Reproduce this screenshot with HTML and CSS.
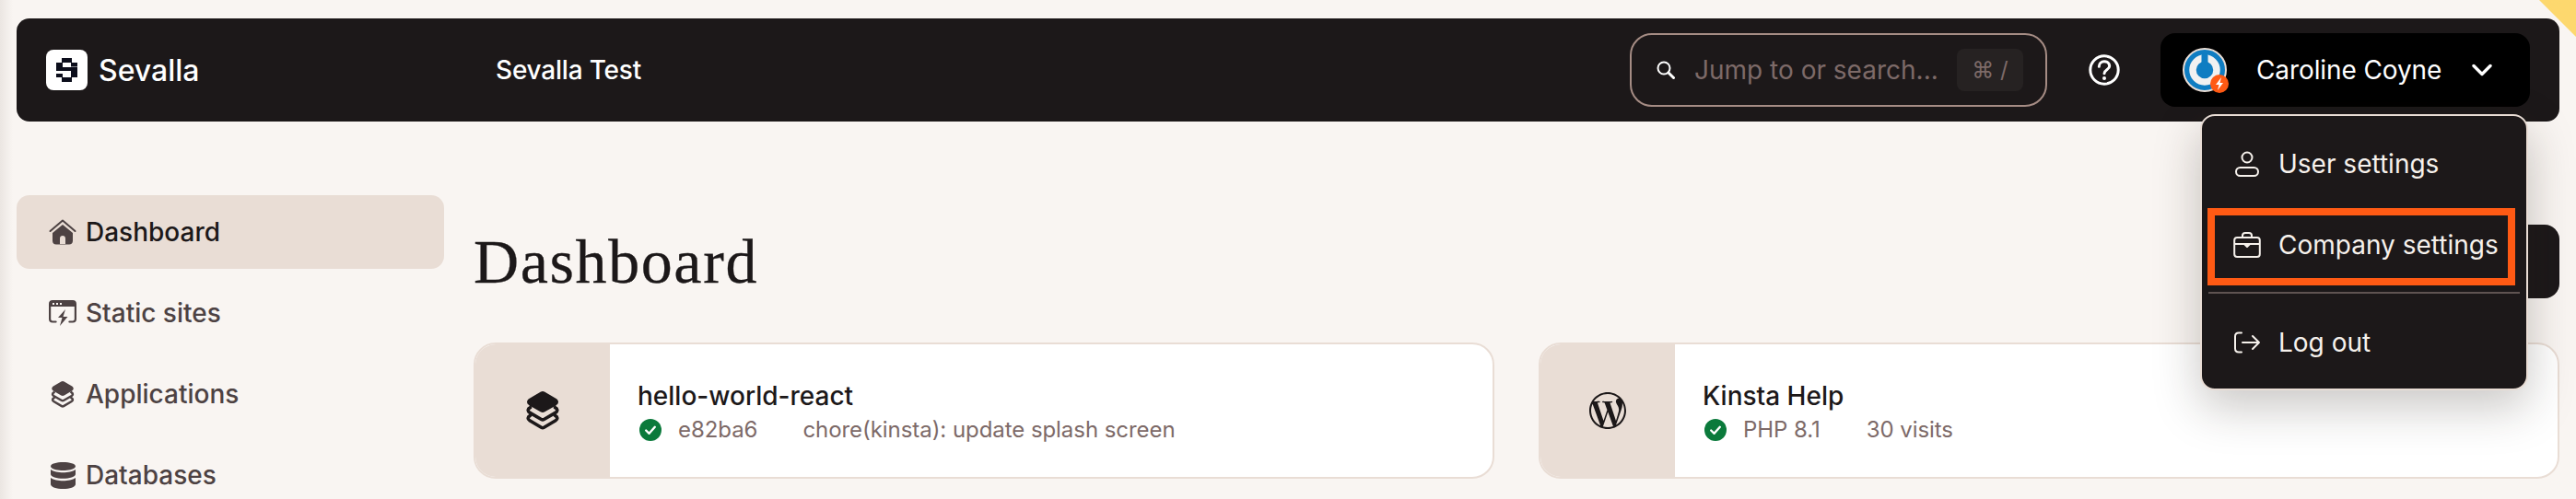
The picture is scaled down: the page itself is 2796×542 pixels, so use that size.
FILE: index.html
```html
<!DOCTYPE html>
<html lang="en">
<head>
  <meta charset="UTF-8">
  <title>Sevalla Dashboard</title>
  <link rel="stylesheet" href="styles.css">
</head>
<body>
  <svg class="defs" width="0" height="0">
    <symbol id="stack" viewBox="0 0 24 28">
      <path fill="currentColor" d="M10.4.5a3.2 3.2 0 0 1 3.2 0l8.2 4.8c2 1.2 2 3.6 0 4.8l-8.2 4.8a3.2 3.2 0 0 1-3.2 0L2.200 10.100c-2-1.200-2-3.600 0-4.800z"/>
      <path fill="none" stroke="currentColor" stroke-width="2.400" stroke-linecap="round" stroke-linejoin="round" d="M3 11.800c-2 1-2 2.600-.4 3.600l8.400 4.900c.7.400 1.300.400 2 0l8.400-4.900c1.600-1 1.600-2.600-.4-3.600M3 17.600c-2 1-2 2.600-.4 3.600l8.400 5c.7.400 1.300.400 2 0l8.400-5c1.600-1 1.600-2.600-.4-3.600"/>
    </symbol>
    <symbol id="check" viewBox="0 0 24 24">
      <circle cx="12" cy="12" r="12" fill="#0b7a3b"/>
      <path fill="none" stroke="#fff" stroke-width="2.400" stroke-linecap="round" stroke-linejoin="round" d="M7.200 12.500l3.400 3.300 6.200-7"/>
    </symbol>
  </svg>

  <div class="corner"></div>

  <header class="topbar">
    <div class="brand">
      <span class="brand-logo">
        <svg width="45" height="44" viewBox="0 0 45 44">
          <path fill="#0c0e1c" d="M17 9h11v5H17zM11 14h7v5h-7zM27 14h7v4.500h-7zM11 19h23v4H11zM27 23h7v7h-7zM11 26h7v4h-7zM17 30h11v5H17z"/>
        </svg>
      </span>
      <span class="brand-name">Sevalla</span>
    </div>
    <div class="project">Sevalla Test</div>

    <div class="top-actions">
      <div class="search">
        <svg class="search-icon" width="20" height="20" viewBox="0 0 20 20">
          <circle cx="8" cy="8" r="6.500" fill="none" stroke="#fff" stroke-width="2"/>
          <path d="M13 13l5.500 5.500" stroke="#fff" stroke-width="3" stroke-linecap="round"/>
        </svg>
        <span class="search-text">Jump to or search...</span>
        <span class="kbd">⌘ /</span>
      </div>
      <svg class="help" width="34" height="34" viewBox="0 0 34 34">
        <circle cx="17" cy="17" r="15.200" fill="none" stroke="#fff" stroke-width="3"/>
        <path d="M11.300 13.200c0-3.200 2.500-5.400 5.700-5.400s5.700 2 5.700 4.900c0 4-5.700 4-5.700 8" fill="none" stroke="#fff" stroke-width="3" stroke-linecap="round"/>
        <circle cx="17" cy="26" r="2" fill="#fff"/>
      </svg>
      <div class="user">
        <svg class="avatar" width="52" height="52" viewBox="0 0 52 52">
          <circle cx="24" cy="24" r="23" fill="#0f7dc2" stroke="#e9ddd5" stroke-width="2"/>
          <circle cx="24" cy="24" r="13" fill="none" stroke="#f1f1f1" stroke-width="7.500"/>
          <rect x="20.500" y="6" width="7" height="18" rx="2" fill="#0f7dc2"/>
          <circle cx="40" cy="39" r="10" fill="#ff5a14"/>
          <path d="M42 32l-6 8h3.500l-1.500 6 6-8h-3.500z" fill="#fff"/>
        </svg>
        <span class="user-name">Caroline Coyne</span>
        <svg class="chevron" width="22" height="14" viewBox="0 0 22 14">
          <path d="M2 2.500l9 9 9-9" fill="none" stroke="#fff" stroke-width="3.400" stroke-linecap="round" stroke-linejoin="round"/>
        </svg>

        <div class="menu">
          <a class="menu-item">
            <span class="menu-icon">
              <svg width="26" height="28" viewBox="0 0 26 28" fill="none" stroke="#f6f1ec" stroke-width="2">
                <circle cx="13" cy="7" r="5.500"/>
                <rect x="1" y="18" width="24" height="9" rx="4.500"/>
              </svg>
            </span>
            User settings
          </a>
          <a class="menu-item">
            <span class="menu-icon">
              <svg width="30" height="28" viewBox="0 0 30 28" fill="none" stroke="#f6f1ec" stroke-width="2" stroke-linejoin="round">
                <path d="M10 6V4c0-1.700 1-3 3-3h4c2 0 3 1.300 3 3v2"/>
                <rect x="1.200" y="6" width="27.600" height="21" rx="3"/>
                <path d="M1.200 13h27.600"/>
                <path d="M12 13h6l-3 3z" fill="#f6f1ec"/>
              </svg>
            </span>
            Company settings
            <span class="highlight"></span>
          </a>
          <div class="menu-sep"></div>
          <a class="menu-item">
            <span class="menu-icon">
              <svg width="30" height="24" viewBox="0 0 30 24" fill="none" stroke="#f6f1ec" stroke-width="2" stroke-linecap="round" stroke-linejoin="round">
                <path d="M9 1.500H6c-2.500 0-4 1.500-4 4v13c0 2.500 1.500 4 4 4h3"/>
                <path d="M10 12h18M21 5l7 7-7 7"/>
              </svg>
            </span>
            Log out
          </a>
        </div>
      </div>
    </div>
  </header>

  <div class="layout">
    <nav class="sidebar">
      <a class="nav-item active">
        <span class="nav-icon">
          <svg width="30" height="28" viewBox="0 0 30 28">
            <path d="M1.500 13L15 1.500 28.500 13" fill="none" stroke="#4d4243" stroke-width="2" stroke-linecap="round" stroke-linejoin="round"/>
            <path fill-rule="evenodd" fill="#4d4243" d="M15 6l11 9v8.500c0 2.500-1.500 4-4 4H8c-2.500 0-4-1.500-4-4V15zM12 27v-6c0-1.800 1.200-3 3-3s3 1.200 3 3v6z"/>
          </svg>
        </span>
        Dashboard
      </a>
      <a class="nav-item">
        <span class="nav-icon">
          <svg width="30" height="28" viewBox="0 0 30 28">
            <path fill="#4d4243" fill-rule="evenodd" d="M4 0h22c2.500 0 4 1.500 4 4v3H0V4c0-2.500 1.500-4 4-4zM4 3h2v2H4zM8 3h2v2H8zM12 3h2v2h-2z"/>
            <path fill="none" stroke="#4d4243" stroke-width="2.200" stroke-linecap="round" d="M1.100 6v14.500c0 2 1 3 3 3h3.500M28.900 6v14.500c0 2-1 3-3 3h-3.500"/>
            <path fill="#4d4243" d="M18 10l-8 9h4.500L12 28l8.500-10H15.500z"/>
          </svg>
        </span>
        Static sites
      </a>
      <a class="nav-item">
        <span class="nav-icon">
          <svg width="26" height="29"><use href="#stack"/></svg>
        </span>
        Applications
      </a>
      <a class="nav-item">
        <span class="nav-icon">
          <svg width="27" height="29" viewBox="0 0 27 29">
            <path fill="#4d4243" d="M13.500 0C20.500 0 27 1.700 27 4.500S20.500 9 13.500 9 0 7.300 0 4.500 6.500 0 13.500 0zM0 8c3 2.300 8.500 3.200 13.500 3.200S24 10.300 27 8v5c0 2.800-6.500 4.800-13.500 4.800S0 15.800 0 13zM0 17c3 2.300 8.500 3.200 13.500 3.200S24 19.300 27 17v7c0 3-6.500 5-13.500 5S0 27 0 24z"/>
          </svg>
        </span>
        Databases
      </a>
    </nav>

    <main class="content">
      <div class="title-row">
        <h1>Dashboard</h1>
        <div class="add-btn"></div>
      </div>

      <div class="cards">
        <div class="card">
          <div class="card-icon">
            <svg width="36" height="42"><use href="#stack"/></svg>
          </div>
          <div class="card-body">
            <div class="card-name">hello-world-react</div>
            <div class="card-meta">
              <svg class="status" width="24" height="24"><use href="#check"/></svg>
              <span class="meta-a">e82ba6</span>
              <span>chore(kinsta): update splash screen</span>
            </div>
          </div>
        </div>

        <div class="card">
          <div class="card-icon">
            <svg width="40" height="40" viewBox="0 0 24 24">
              <path fill="#1c1819" d="M21.469 6.825c.84 1.537 1.318 3.3 1.318 5.175 0 3.979-2.156 7.456-5.363 9.325l3.295-9.527c.615-1.54.82-2.771.82-3.864 0-.405-.026-.78-.07-1.11m-7.981.105c.647-.03 1.232-.105 1.232-.105.582-.075.514-.93-.067-.899 0 0-1.755.135-2.88.135-1.064 0-2.85-.15-2.85-.15-.585-.03-.661.855-.075.885 0 0 .54.061 1.125.09l1.68 4.605-2.37 7.08L5.354 6.9c.649-.03 1.234-.1 1.234-.1.585-.075.516-.93-.065-.896 0 0-1.746.138-2.874.138-.2 0-.438-.008-.69-.015C4.911 3.15 8.235 1.215 12 1.215c2.809 0 5.365 1.072 7.286 2.833-.046-.003-.091-.009-.141-.009-1.06 0-1.812.923-1.812 1.914 0 .89.513 1.643 1.06 2.531.411.72.89 1.643.89 2.977 0 .915-.354 1.994-.821 3.479l-1.075 3.585-3.9-11.61.001.014zM12 22.784c-1.059 0-2.081-.153-3.048-.437l3.237-9.406 3.315 9.087c.024.053.05.101.078.149-1.12.393-2.325.609-3.582.609M1.211 12c0-1.564.336-3.05.935-4.39L7.29 21.709C3.694 19.96 1.212 16.271 1.211 12M12 0C5.385 0 0 5.385 0 12s5.385 12 12 12 12-5.385 12-12S18.615 0 12 0"/>
            </svg>
          </div>
          <div class="card-body">
            <div class="card-name">Kinsta Help</div>
            <div class="card-meta">
              <svg class="status" width="24" height="24"><use href="#check"/></svg>
              <span class="meta-b">PHP 8.1</span>
              <span>30 visits</span>
            </div>
          </div>
        </div>
      </div>
    </main>
  </div>
</body>
</html>
```

FILE: styles.css
```css
html, body {
  margin: 0;
  height: 542px;
  overflow: hidden;
}
body {
  position: relative;
  font-family: Inter, "Liberation Sans", sans-serif;
  font-size: 28px;
  color: #1c1819;
  background: linear-gradient(to right, #ebe6e2, #f9f5f2 14px);
}
svg {
  display: block;
}
.defs {
  position: absolute;
}
.corner {
  position: absolute;
  top: 0;
  right: 0;
  width: 40px;
  height: 40px;
  background: #fdd86e;
  clip-path: polygon(0 0, 100% 0, 100% 100%);
}

/* top bar */
.topbar {
  position: relative;
  z-index: 10;
  display: flex;
  align-items: center;
  height: 112px;
  margin: 20px 18px 0;
  padding: 0 32px;
  background: #1c1819;
  border-radius: 14px;
  color: #fff;
}
.brand {
  display: flex;
  align-items: center;
  gap: 12px;
  width: 488px;
}
.brand-logo {
  width: 45px;
  height: 44px;
  background: #fff;
  border-radius: 8px;
}
.brand-name {
  font-size: 32px;
  font-weight: 500;
}
.project {
  font-weight: 500;
  letter-spacing: -0.2px;
}
.top-actions {
  display: flex;
  align-items: center;
  margin-left: auto;
}
.search {
  display: flex;
  align-items: center;
  box-sizing: border-box;
  width: 453px;
  height: 80px;
  padding: 0 24px 0 27px;
  border: 2px solid #a58c84;
  border-radius: 24px;
}
.search-icon {
  margin-right: 21px;
}
.search-text {
  color: #7d6a68;
}
.kbd {
  margin-left: auto;
  width: 72px;
  height: 46px;
  line-height: 46px;
  text-align: center;
  font-size: 24px;
  color: #7d6a68;
  background: #262222;
  border-radius: 8px;
  font-family: Inter, "DejaVu Sans", sans-serif;
}
.help {
  margin: 0 44px 0 45px;
}
.user {
  position: relative;
  display: flex;
  align-items: center;
  box-sizing: border-box;
  width: 401px;
  height: 80px;
  padding: 0 41px 0 24px;
  background: #000;
  border-radius: 16px;
}
.avatar {
  margin: 4px 28px 0 0;
  flex: none;
}
.user-name {
  flex: 1;
  letter-spacing: -0.1px;
}
.menu {
  position: absolute;
  top: 88px;
  right: 2px;
  box-sizing: border-box;
  width: 356px;
  height: 300px;
  padding: 12px 7px 0;
  background: #1c1819;
  border: 2px solid #e9ddd5;
  border-radius: 16px;
  color: #f6f1ec;
  box-shadow: 0 18px 50px rgba(40, 30, 25, 0.25);
}
.menu-item {
  position: relative;
  display: flex;
  align-items: center;
  height: 80px;
  margin-bottom: 8px;
  padding-left: 27px;
}
.menu-item:last-child {
  margin-bottom: 0;
}
.menu-icon {
  display: flex;
  justify-content: center;
  width: 30px;
  margin-right: 19px;
}
.highlight {
  position: absolute;
  top: 0;
  left: -1px;
  box-sizing: border-box;
  width: 334px;
  height: 84px;
  border: 8px solid #ff5a14;
}
.menu-sep {
  height: 2px;
  margin: 11px 0 13px;
  background: #5f5351;
}

/* page */
.layout {
  display: flex;
  gap: 32px;
  padding: 0 18px;
}
.sidebar {
  flex: none;
  width: 464px;
  padding-top: 80px;
}
.nav-item {
  display: flex;
  align-items: center;
  box-sizing: border-box;
  height: 80px;
  margin-bottom: 8px;
  padding-left: 35px;
  border-radius: 14px;
  font-weight: 500;
  color: #4d4243;
}
.nav-item.active {
  background: #e9ddd5;
  color: #1c1819;
}
.nav-icon {
  display: flex;
  justify-content: center;
  width: 30px;
  margin-right: 10px;
  color: #4d4243;
}
.content {
  flex: 1;
  padding-top: 112px;
}
.title-row {
  display: flex;
  justify-content: space-between;
  align-items: center;
  height: 80px;
}
h1 {
  margin: 0;
  font-family: "Liberation Serif", serif;
  font-size: 68px;
  font-weight: 400;
  letter-spacing: 1.6px;
  -webkit-text-stroke: 0.3px #1c1819;
}
.add-btn {
  width: 300px;
  height: 80px;
  background: #1c1819;
  border-radius: 16px;
}
.cards {
  display: grid;
  grid-template-columns: 1fr 1fr;
  gap: 48px;
  margin-top: 48px;
}
.card {
  display: flex;
  height: 148px;
  background: #fff;
  border: 2px solid #e9ddd5;
  border-radius: 24px;
  box-sizing: border-box;
  overflow: hidden;
}
.card-icon {
  display: flex;
  flex: none;
  align-items: center;
  justify-content: center;
  width: 146px;
  background: #e9ddd5;
}
.card-body {
  display: flex;
  flex-direction: column;
  justify-content: center;
  padding: 3px 0 0 30px;
}
.card-name {
  font-weight: 500;
  line-height: 38px;
}
.card-meta {
  display: flex;
  align-items: center;
  height: 36px;
  font-size: 24px;
  letter-spacing: -0.06px;
  color: #7d6a68;
}
.status {
  margin: 0 18px 0 2px;
}
.meta-a {
  margin-right: 49px;
}
.meta-b {
  margin-right: 50px;
}
```
